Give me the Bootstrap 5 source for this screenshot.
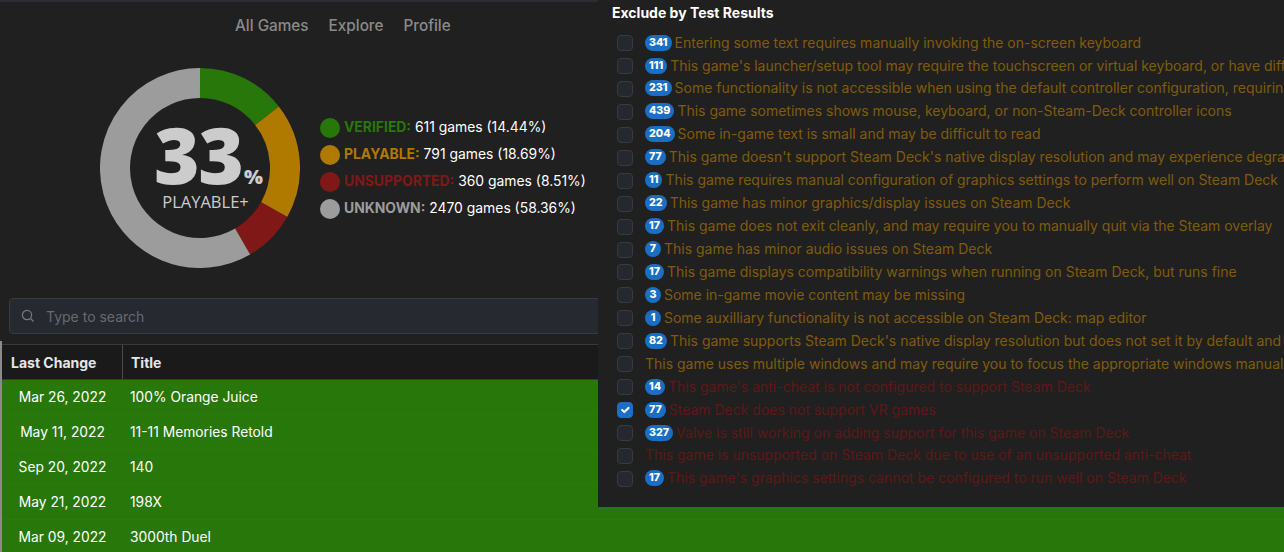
<!DOCTYPE html>
<html lang="en">

<head>
    <meta charset="UTF-8">
    <meta name="viewport" content="width=device-width, initial-scale=1">
    <title>Steam Deck Games</title>
    <link href="https://cdn.jsdelivr.net/npm/bootstrap@5.3.0/dist/css/bootstrap.min.css" rel="stylesheet">
    <style>
        html, body {
            height: 100%;
            overflow: hidden;
        }

        body {
            background: #202020;
            font-family: Inter, "Liberation Sans", sans-serif;
            font-size: 14px;
            color: #fff;
            position: relative;
        }

        .top-edge {
            height: 2px;
            background: #2c2d33;
        }

        .main-nav {
            height: 48px;
            padding-left: 235px;
            gap: 20px;
        }

        .main-nav a {
            color: #8a8a8a;
            font-size: 15.3px;
            font-weight: 500;
            text-decoration: none;
        }

        .summary {
            height: 248px;
            padding-left: 100px;
        }

        .donut-wrap {
            width: 200px;
            height: 200px;
            position: relative;
            margin-top: 18px;
        }

        .donut-label {
            position: absolute;
            inset: 0;
            text-align: center;
            color: #ccc;
            font-family: "Open Sans", sans-serif;
        }

        .donut-num {
            position: absolute;
            left: 54px;
            top: 47px;
            font-size: 78px;
            line-height: 78px;
            font-weight: 800;
            letter-spacing: -1.5px;
        }

        .donut-pct {
            position: absolute;
            left: 144px;
            top: 97px;
            font-size: 20px;
            line-height: 24px;
            font-weight: 800;
        }

        .donut-sub {
            position: absolute;
            left: 0;
            width: 211px;
            top: 123px;
            font-size: 16.5px;
            line-height: 22px;
        }

        .legend {
            margin-left: 20px;
            margin-top: 67px;
            gap: 6px;
            font-size: 13.9px;
        }

        .legend-row {
            height: 21px;
            gap: 4px;
            white-space: nowrap;
        }

        .dot {
            width: 20px;
            height: 20px;
            border-radius: 50%;
            flex: none;
        }

        .legend-row b {
            font-weight: 700;
        }

        .c-green { color: #28770a; }
        .c-amber { color: #b07900; }
        .c-red { color: #811818; }
        .c-gray { color: #9c9c9c; }
        .bg-green { background: #28770a; }
        .bg-amber { background: #b07900; }
        .bg-red { background: #811818; }
        .bg-gray { background: #9c9c9c; }

        .search-box {
            margin: 0 0 0 9px;
            height: 36px;
            background: #272930;
            border: 1px solid #383a42;
            border-radius: 4px;
            padding-left: 11px;
            gap: 11px;
            color: #666a73;
        }

        .game-table {
            margin-top: 7px;
            padding-top: 3px;
            border-left: 2px solid #8b8b8b;
        }

        .head-row {
            height: 36px;
            background: #1a1a1a;
            font-weight: 700;
            color: #e6e6e6;
            border-top: 1px solid #3a3a3a;
            border-bottom: 1px solid #3a3a3a;
        }

        .head-date {
            width: 121px;
            padding-left: 9px;
            border-right: 1px solid #4a4a4a;
        }

        .head-title {
            padding-left: 8px;
        }

        .game-row {
            height: 35px;
            background: #28770a;
            border-bottom: 1px solid #2a7a0c;
            font-size: 13.8px;
        }

        .game-date {
            width: 121px;
            text-align: center;
        }

        .game-title {
            padding-left: 7px;
        }

        .filter-menu {
            position: absolute;
            left: 598px;
            top: 0;
            width: 686px;
            height: 507px;
            background: #202020;
            overflow: hidden;
            padding: 4px 0 0 14px;
            white-space: nowrap;
        }

        .filter-title {
            font-weight: 700;
            font-size: 14px;
            line-height: 17px;
            margin-bottom: 9.6px;
        }

        .filter-item {
            height: 22.95px;
            gap: 12px;
            padding-left: 5px;
            letter-spacing: -0.01px;
        }

        .filter-item .form-check-input {
            width: 16px;
            height: 16px;
            margin: 2px 0 0;
            flex: none;
            background-color: #26282f;
            border: 1px solid #383a42;
            border-radius: 4px;
        }

        .filter-item .form-check-input:checked {
            background-color: #1a6fc4;
            border-color: #1a6fc4;
        }

        .count-pill {
            display: inline-block;
            min-width: 16px;
            text-align: center;
            vertical-align: top;
            background: #1a6fc4;
            color: #fff;
            font-size: 10.7px;
            font-weight: 800;
            line-height: 16px;
            padding: 0 4px;
            border-radius: 8px;
            margin: 3px 3px -1px 0;
        }

        .t-amber { color: #805c0a; }
        .t-red { color: #5e1818; }
    </style>
</head>

<body>
    <div class="top-edge"></div>

    <!-- Nav -->
    <nav class="main-nav d-flex align-items-center">
        <a href="#">All Games</a>
        <a href="#">Explore</a>
        <a href="#">Profile</a>
    </nav>

    <!-- Donut and legend -->
    <div class="summary d-flex align-items-start">
        <div class="donut-wrap">
            <svg width="200" height="200" viewBox="0 0 200 200">
                <g fill="none" stroke-width="30">
                    <path d="M100 15A85 85 0 0 1 166.97 47.66" stroke="#28770a"></path>
                    <path d="M166.97 47.66A85 85 0 0 1 174.15 141.56" stroke="#b07900"></path>
                    <path d="M174.15 141.56A85 85 0 0 1 142.63 173.53" stroke="#811818"></path>
                    <path d="M142.63 173.53A85 85 0 1 1 100 15" stroke="#9c9c9c"></path>
                </g>
            </svg>
            <div class="donut-label">
                <span class="donut-num">33</span>
                <span class="donut-pct">%</span>
                <span class="donut-sub">PLAYABLE+</span>
            </div>
        </div>
        <div class="legend d-flex flex-column">
            <div class="legend-row d-flex align-items-center"><span class="dot bg-green"></span><span><b class="c-green">VERIFIED:</b> 611 games (14.44%)</span></div>
            <div class="legend-row d-flex align-items-center"><span class="dot bg-amber"></span><span><b class="c-amber">PLAYABLE:</b> 791 games (18.69%)</span></div>
            <div class="legend-row d-flex align-items-center"><span class="dot bg-red"></span><span><b class="c-red">UNSUPPORTED:</b> 360 games (8.51%)</span></div>
            <div class="legend-row d-flex align-items-center"><span class="dot bg-gray"></span><span><b class="c-gray">UNKNOWN:</b> 2470 games (58.36%)</span></div>
        </div>
    </div>

    <!-- Search -->
    <div class="search-box d-flex align-items-center">
        <svg width="14" height="14" viewBox="0 0 14 14" fill="none" stroke="#777b84" stroke-width="1.2"><circle cx="6" cy="6" r="4.6"></circle><path d="M9.5 9.5 12.5 12.5"></path></svg>
        <span>Type to search</span>
    </div>

    <!-- Games table -->
    <div class="game-table">
        <div class="head-row d-flex align-items-center">
            <div class="head-date h-100 d-flex align-items-center">Last Change</div>
            <div class="head-title">Title</div>
        </div>
        <div class="game-row d-flex align-items-center"><div class="game-date">Mar 26, 2022</div><div class="game-title">100% Orange Juice</div></div>
        <div class="game-row d-flex align-items-center"><div class="game-date">May 11, 2022</div><div class="game-title">11-11 Memories Retold</div></div>
        <div class="game-row d-flex align-items-center"><div class="game-date">Sep 20, 2022</div><div class="game-title">140</div></div>
        <div class="game-row d-flex align-items-center"><div class="game-date">May 21, 2022</div><div class="game-title">198X</div></div>
        <div class="game-row d-flex align-items-center"><div class="game-date">Mar 09, 2022</div><div class="game-title">3000th Duel</div></div>
    </div>

    <!-- Filter dropdown -->
    <div class="filter-menu">
        <div class="filter-title">Exclude by Test Results</div>
        <label class="filter-item d-flex align-items-center"><input class="form-check-input" type="checkbox"><span class="t-amber"><span class="count-pill">341</span>Entering some text requires manually invoking the on-screen keyboard</span></label>
        <label class="filter-item d-flex align-items-center"><input class="form-check-input" type="checkbox"><span class="t-amber"><span class="count-pill">111</span>This game's launcher/setup tool may require the touchscreen or virtual keyboard, or have difficult to read text</span></label>
        <label class="filter-item d-flex align-items-center"><input class="form-check-input" type="checkbox"><span class="t-amber"><span class="count-pill">231</span>Some functionality is not accessible when using the default controller configuration, requiring use of the touchscreen</span></label>
        <label class="filter-item d-flex align-items-center"><input class="form-check-input" type="checkbox"><span class="t-amber"><span class="count-pill">439</span>This game sometimes shows mouse, keyboard, or non-Steam-Deck controller icons</span></label>
        <label class="filter-item d-flex align-items-center"><input class="form-check-input" type="checkbox"><span class="t-amber"><span class="count-pill">204</span>Some in-game text is small and may be difficult to read</span></label>
        <label class="filter-item d-flex align-items-center"><input class="form-check-input" type="checkbox"><span class="t-amber"><span class="count-pill">77</span>This game doesn't support Steam Deck's native display resolution and may experience degraded performance</span></label>
        <label class="filter-item d-flex align-items-center"><input class="form-check-input" type="checkbox"><span class="t-amber"><span class="count-pill">11</span>This game requires manual configuration of graphics settings to perform well on Steam Deck</span></label>
        <label class="filter-item d-flex align-items-center"><input class="form-check-input" type="checkbox"><span class="t-amber"><span class="count-pill">22</span>This game has minor graphics/display issues on Steam Deck</span></label>
        <label class="filter-item d-flex align-items-center"><input class="form-check-input" type="checkbox"><span class="t-amber"><span class="count-pill">17</span>This game does not exit cleanly, and may require you to manually quit via the Steam overlay</span></label>
        <label class="filter-item d-flex align-items-center"><input class="form-check-input" type="checkbox"><span class="t-amber"><span class="count-pill">7</span>This game has minor audio issues on Steam Deck</span></label>
        <label class="filter-item d-flex align-items-center"><input class="form-check-input" type="checkbox"><span class="t-amber"><span class="count-pill">17</span>This game displays compatibility warnings when running on Steam Deck, but runs fine</span></label>
        <label class="filter-item d-flex align-items-center"><input class="form-check-input" type="checkbox"><span class="t-amber"><span class="count-pill">3</span>Some in-game movie content may be missing</span></label>
        <label class="filter-item d-flex align-items-center"><input class="form-check-input" type="checkbox"><span class="t-amber"><span class="count-pill">1</span>Some auxilliary functionality is not accessible on Steam Deck: map editor</span></label>
        <label class="filter-item d-flex align-items-center"><input class="form-check-input" type="checkbox"><span class="t-amber"><span class="count-pill">82</span>This game supports Steam Deck's native display resolution but does not set it by default and may require you to configure it</span></label>
        <label class="filter-item d-flex align-items-center"><input class="form-check-input" type="checkbox"><span class="t-amber">This game uses multiple windows and may require you to focus the appropriate windows manually</span></label>
        <label class="filter-item d-flex align-items-center"><input class="form-check-input" type="checkbox"><span class="t-red"><span class="count-pill">14</span>This game's anti-cheat is not configured to support Steam Deck</span></label>
        <label class="filter-item d-flex align-items-center"><input class="form-check-input" type="checkbox" checked><span class="t-red"><span class="count-pill">77</span>Steam Deck does not support VR games</span></label>
        <label class="filter-item d-flex align-items-center"><input class="form-check-input" type="checkbox"><span class="t-red"><span class="count-pill">327</span>Valve is still working on adding support for this game on Steam Deck</span></label>
        <label class="filter-item d-flex align-items-center"><input class="form-check-input" type="checkbox"><span class="t-red">This game is unsupported on Steam Deck due to use of an unsupported anti-cheat</span></label>
        <label class="filter-item d-flex align-items-center"><input class="form-check-input" type="checkbox"><span class="t-red"><span class="count-pill">17</span>This game's graphics settings cannot be configured to run well on Steam Deck</span></label>
    </div>

    <script src="https://cdn.jsdelivr.net/npm/bootstrap@5.3.0/dist/js/bootstrap.bundle.min.js"></script>
</body>

</html>
